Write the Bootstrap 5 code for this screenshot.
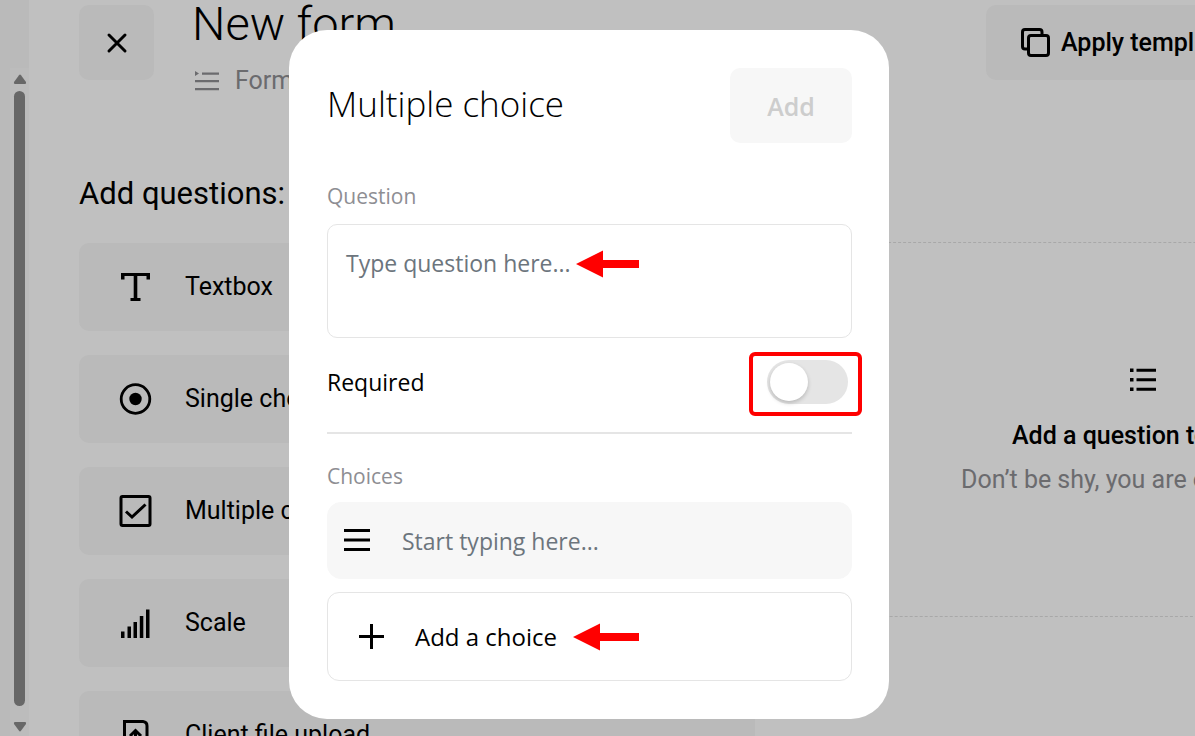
<!DOCTYPE html>
<html lang="en">
<head>
<meta charset="utf-8">
<meta name="viewport" content="width=device-width, initial-scale=1">
<title>New form</title>
<link href="https://cdn.jsdelivr.net/npm/bootstrap@5.3.0/dist/css/bootstrap.min.css" rel="stylesheet">
<style>
  body { font-family: Roboto, "Liberation Sans", sans-serif; font-size: 25px; line-height: 30px; color: #000; background: #fff; }
  .app { height: 100vh; }
  .tile { background: #f7f7f7; border: 0; border-radius: 10px; color: #000; font-size: 25px; line-height: 30px; }
  .soft { color: #8e8e93; }
  svg { flex: none; display: block; }

  /* left rail and its scrollbar */
  .rail { width: 29px; background: #f7f7f7; }
  .rail-track { width: 19px; margin-top: 68px; padding: 6px 0 0; background: #fafafa; }
  .rail-thumb { width: 11px; border-radius: 6px; background: #8b8b8b; margin: 6px 0 8px; }

  /* page header */
  .page-head { padding: 5px 0 0 50px; height: 96px; gap: 38px; }
  .close-tile { width: 75px; height: 75px; }
  .form-title { font-size: 47px; line-height: 58px; font-weight: 300; margin-top: -10px; }
  .form-tab { margin-top: 13px; padding-left: 3px; }
  .apply-tile { width: 320px; height: 75px; padding-left: 35px; margin-left: auto; margin-right: -111px; gap: 11px; }

  /* question palette */
  .page-body { padding-left: 50px; gap: 38px; }
  .palette { width: 676px; }
  .palette h2 { font-size: 31px; line-height: 38px; margin: 79px 0 30px; font-weight: 400; }
  .palette .tile { height: 88px; padding-left: 40px; gap: 33px; }
  .dropzone { width: 700px; height: 375px; margin-top: 146px; border: 1px dashed #e0e0e0; border-radius: 10px; padding-top: 125px; }
  .drop-title { width: 262px; margin-top: 29px; }
  .drop-text { width: 364px; margin-top: 14px; }

  /* dialog */
  .veil { background: rgba(0, 0, 0, .247); padding: 30px 17px 0 0; }
  .dialog-box { width: 600px; padding: 38px 37px 38px 38px; border-radius: 38px; background: #fff; font-family: "Open Sans", "Noto Sans", sans-serif; font-size: 23px; }
  .dialog-title { font-size: 35px; line-height: 44px; font-weight: 300; padding-bottom: 3px; }
  .add-btn { width: 122px; height: 75px; font-weight: 600; color: #cdcdcd; }
  .field-label { font-size: 21px; line-height: 30px; }
  .question-label { margin: 38px 0 13px; }
  .box { border: 1px solid #e5e5e5; border-radius: 10px; font-size: 23px; line-height: 30px; color: #000; background: #fff; }
  .box::placeholder, .choice input::placeholder { color: #6c757d; opacity: 1; }
  textarea.box { height: 114px; padding: 23px 18px; resize: none; }
  .required-row { margin-top: 22px; }
  .switch-wrap { margin-right: 4px; }
  .switch-wrap::after { content: ""; position: absolute; inset: -8px -14px -12px -18px; border: 4px solid #f00; border-radius: 6px; pointer-events: none; }
  .form-check-input.toggle { width: 81px; height: 44px; margin: 0; border: 0; border-radius: 22px; background: #e5e5e5; appearance: none; }
  .form-check-input.toggle::before { content: ""; display: block; width: 38px; height: 38px; margin: 3px; border-radius: 50%; background: #fff; box-shadow: 0 2px 4px rgba(0, 0, 0, .2); }
  .rule { height: 2px; background: #e5e5e5; opacity: 1; border: 0; margin: 28px 0 27px; }
  .choice { height: 77px; margin: 11px 0 13px; padding: 0 16px; gap: 32px; border: 1px solid #f7f7f7; background: #f7f7f7; border-radius: 14px; }
  .choice input { border: 0; background: transparent; padding: 0; font-size: 23px; line-height: 30px; }
  .add-choice { height: 89px; padding-left: 30px; gap: 30px; border-radius: 12px; font-size: 24px; }
  .pointer { position: absolute; top: 50%; }
  .pointer-q { left: 249px; margin-top: -31px; }
  .pointer-c { left: 246px; margin-top: -14px; }
</style>
</head>
<body class="overflow-hidden">

<div class="app d-flex overflow-hidden">
  <div class="rail d-flex justify-content-end flex-shrink-0">
    <div class="rail-track d-flex flex-column align-items-center">
      <svg width="14" height="11" viewBox="0 0 14 11"><path d="M6 1.200Q7 0 8 1.200L13 8Q13.600 10 12 10H2Q.4 10 1 8Z" fill="#8b8b8b"/></svg>
      <div class="rail-thumb flex-grow-1"></div>
      <svg width="14" height="22" viewBox="0 0 14 22"><path d="M6 17.800Q7 19 8 17.800L13 11Q13.600 9 12 9H2Q.4 9 1 11Z" fill="#8b8b8b" transform="translate(0 -1)"/></svg>
    </div>
  </div>

  <main class="flex-grow-1 overflow-hidden">
    <header class="page-head d-flex align-items-start">
      <button class="tile close-tile d-flex align-items-center justify-content-center flex-shrink-0" aria-label="Close">
        <svg width="22" height="22" viewBox="0 0 22 22" stroke="#000" stroke-width="3" stroke-linecap="round"><path d="M3 3L19 19M19 3L3 19"/></svg>
      </button>
      <div class="flex-shrink-0">
        <h1 class="form-title mb-0">New form</h1>
        <div class="form-tab d-flex align-items-center soft gap-3">
          <svg width="24" height="20" viewBox="0 0 24 20" fill="currentColor"><path d="M0 0L4 2.500L0 5ZM7 1.500h17v2.200H7ZM0 9h24v2.200H0ZM0 17h24v2.200H0Z"/></svg>
          <span>Form</span>
        </div>
      </div>
      <button class="tile apply-tile d-flex align-items-center flex-shrink-0 fw-medium text-nowrap">
        <svg width="29" height="29" viewBox="0 0 29 29" fill="none" stroke="#000" stroke-width="3"><rect x="7.500" y="7.500" width="20" height="20" rx="2.500"/><path d="M7.500 21H4Q1.500 21 1.500 18.500V4Q1.500 1.500 4 1.500H18.500Q21 1.500 21 4V7.500"/></svg>
        <span>Apply templ</span>
      </button>
    </header>

    <div class="page-body d-flex align-items-start">
      <section class="palette flex-shrink-0">
        <h2>Add questions:</h2>
        <div class="d-flex flex-column gap-4">
          <button class="tile d-flex align-items-center">
            <svg width="33" height="32" viewBox="0 0 33 32"><path d="M2 2H31V8.500H27.500V5H18.300V27H21.500V30H11.500V27H14.700V5H5.500V8.500H2Z"/></svg>
            <span>Textbox</span>
          </button>
          <button class="tile d-flex align-items-center">
            <svg width="33" height="32" viewBox="0 0 33 32"><circle cx="16.500" cy="16" r="14.300" fill="none" stroke="#000" stroke-width="2.800"/><circle cx="16.500" cy="16" r="6.200"/></svg>
            <span>Single choice</span>
          </button>
          <button class="tile d-flex align-items-center">
            <svg width="33" height="32" viewBox="0 0 33 32" fill="none" stroke="#000" stroke-width="3"><rect x="2" y="1.500" width="29" height="29" rx="1.500"/><path d="M7 16.500L13 22L26.500 9.500"/></svg>
            <span>Multiple choice</span>
          </button>
          <button class="tile d-flex align-items-center">
            <svg width="33" height="32" viewBox="0 0 33 32"><path d="M2 24.500h3.500V31H2ZM8.500 19.500H12V31H8.500ZM14.500 15H18V31H14.500ZM20.800 9h3.500V31h-3.500ZM27 2.500h3.500V31H27Z"/></svg>
            <span>Scale</span>
          </button>
          <button class="tile d-flex align-items-center">
            <svg width="33" height="32" viewBox="0 0 33 32" fill="none" stroke="#000" stroke-width="3"><path d="M5.500 2.500H24Q28 3 28 7V30.500H5.500Z"/><path d="M16.500 24V12M11 17L16.500 11.500L22 17"/></svg>
            <span>Client file upload</span>
          </button>
        </div>
      </section>

      <section class="dropzone flex-shrink-0 d-flex flex-column align-items-center">
        <svg width="26" height="24" viewBox="0 0 26 24"><path d="M0 .5h3.500V4H0ZM6.500 .7H26V3.700H6.500ZM0 10h3.500v3.500H0ZM6.500 10.200H26v3H6.500ZM0 19.500h3.500V23H0ZM6.500 19.700H26v3H6.500Z"/></svg>
        <div class="drop-title fw-medium text-nowrap">Add a question to</div>
        <div class="drop-text soft text-nowrap">Don’t be shy, you are o</div>
      </section>
    </div>
  </main>
</div>

<div class="veil position-fixed top-0 start-0 w-100 h-100 d-flex justify-content-center align-items-start">
  <div class="dialog-box" role="dialog" aria-labelledby="dialogTitle">
    <div class="d-flex align-items-center justify-content-between">
      <h2 class="dialog-title mb-0" id="dialogTitle">Multiple choice</h2>
      <button class="tile add-btn" disabled>Add</button>
    </div>

    <label class="field-label question-label soft d-block" for="question">Question</label>
    <div class="position-relative">
      <textarea class="box w-100 d-block" id="question" placeholder="Type question here..."></textarea>
      <svg class="pointer pointer-q" width="64" height="28" viewBox="0 0 64 28" fill="#f00"><path d="M0 14L27 .5V10H63V18H27V27.500Z"/></svg>
    </div>

    <div class="required-row d-flex align-items-center justify-content-between">
      <label for="required">Required</label>
      <div class="switch-wrap position-relative">
        <input class="form-check-input toggle d-block" type="checkbox" role="switch" id="required">
      </div>
    </div>

    <hr class="rule">

    <label class="field-label soft d-block" for="choice1">Choices</label>
    <div class="choice d-flex align-items-center">
      <svg width="26" height="24" viewBox="0 0 26 24"><path d="M0 0h26v3H0ZM0 9.500h26v3H0ZM0 19h26v3H0Z"/></svg>
      <input class="flex-grow-1" type="text" id="choice1" placeholder="Start typing here...">
    </div>
    <div class="position-relative">
      <button class="box add-choice w-100 d-flex align-items-center">
        <svg width="27" height="27" viewBox="0 0 27 27" stroke="#000" stroke-width="3"><path d="M1 13.500H26M13.500 1V26"/></svg>
        <span>Add a choice</span>
      </button>
      <svg class="pointer pointer-c" width="67" height="28" viewBox="0 0 67 28" fill="#f00"><path d="M0 14L27 .5V10H66V18H27V27.500Z"/></svg>
    </div>
  </div>
</div>

<script src="https://cdn.jsdelivr.net/npm/bootstrap@5.3.0/dist/js/bootstrap.bundle.min.js"></script>
</body>
</html>
